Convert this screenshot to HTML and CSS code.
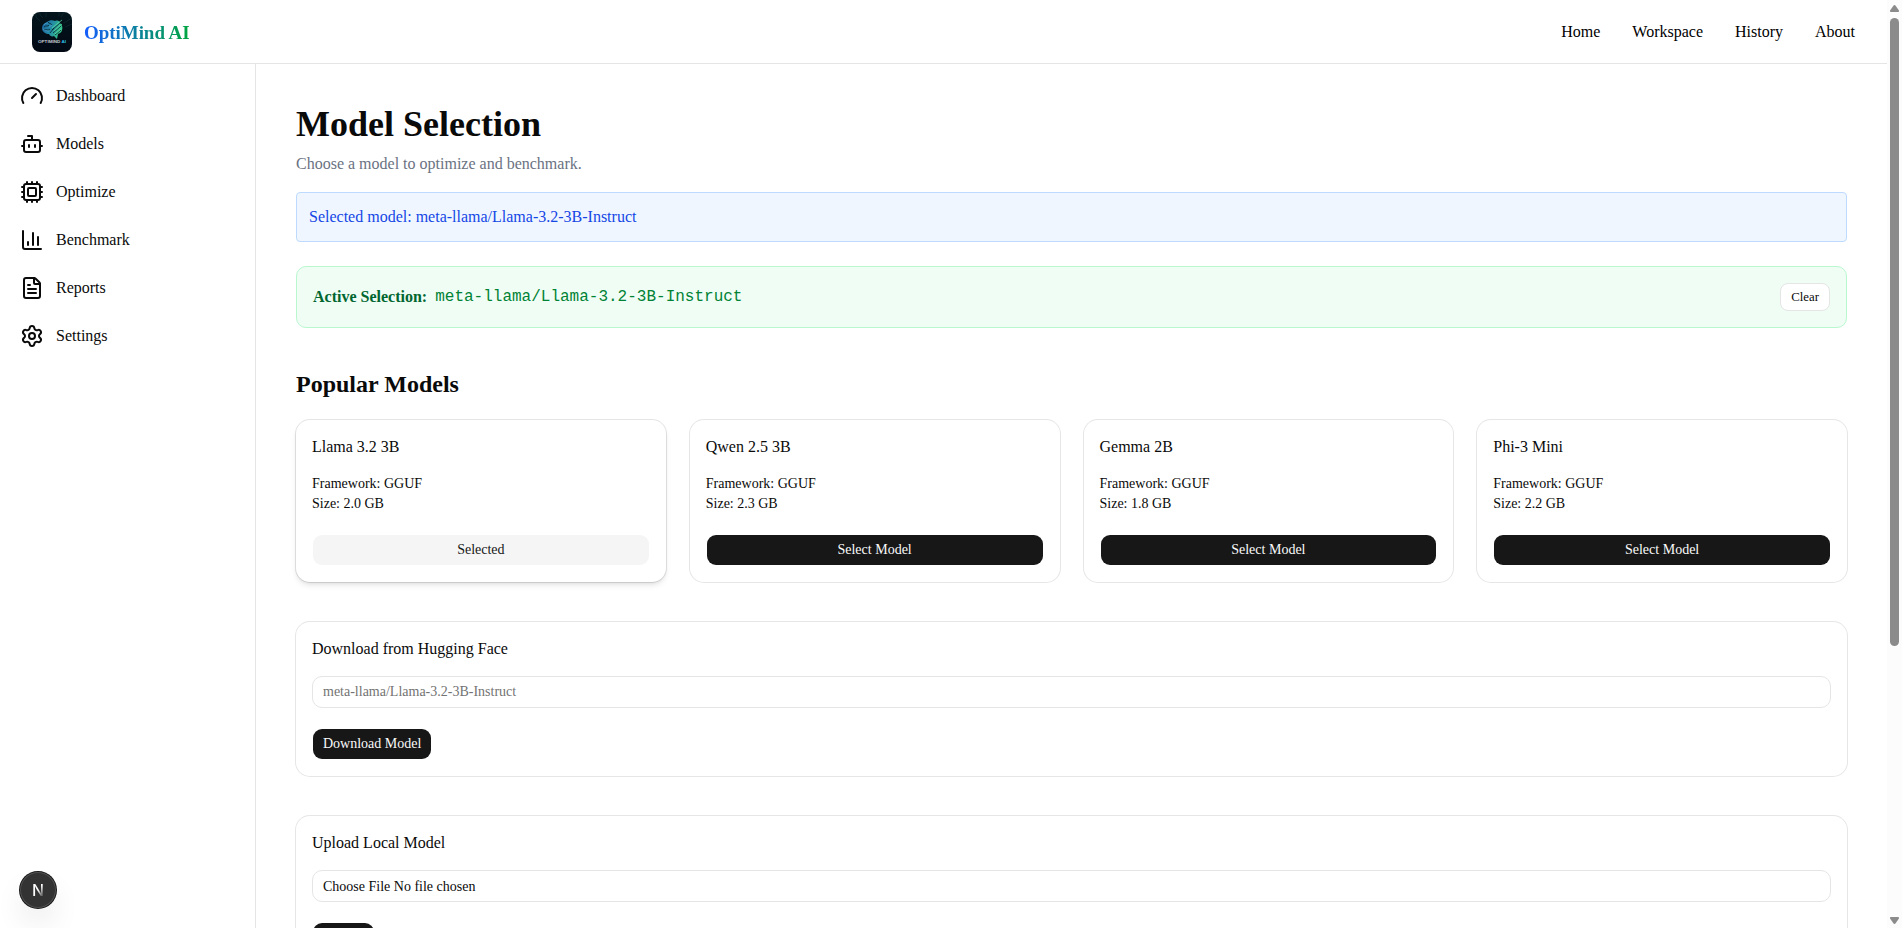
FILE: index.html
```
<!DOCTYPE html>
<html lang="en">
<head>
    <meta charset="UTF-8">
    <meta name="viewport" content="width=device-width, initial-scale=1.0">
    <title>OptiMind AI</title>
    <link rel="stylesheet" href="styles.css">
</head>
<body>
    <div class="page">
        <header class="header">
            <a class="brand" href="#">
                <svg class="brand-logo" width="40" height="40" viewBox="0 0 40 40">
                    <defs>
                        <linearGradient id="brainFill" x1="0" y1="0" x2="1" y2="0.3">
                            <stop offset="0" stop-color="#1c5f9c"/>
                            <stop offset="0.5" stop-color="#2389a6"/>
                            <stop offset="1" stop-color="#35c48a"/>
                        </linearGradient>
                        <linearGradient id="logoBg" x1="0" y1="0" x2="0" y2="1">
                            <stop offset="0" stop-color="#04151c"/>
                            <stop offset="1" stop-color="#020914"/>
                        </linearGradient>
                    </defs>
                    <rect width="40" height="40" fill="url(#logoBg)"/>
                    <g fill="none" stroke="#123038" stroke-width="0.6">
                        <path d="M4 0v5l4 4M8 0v3l3 3M14 0v5M27 0v4M32 0l-3 5M40 6l-8 5M40 12l-7 3"/>
                    </g>
                    <path d="M10 16c0-3 2-5 5-6 2-2 6-2 8-1 3-1 5 0 5 2 2 2 3 4 2 7 0 2-2 3-4 4l-1 5-3-3c-2 1-4 0-5-2-3 0-7-2-7-6z" fill="url(#brainFill)"/>
                    <g fill="none" stroke="#06202c" stroke-width="0.8">
                        <path d="M12 15c2-2 4 0 5-2M12 18c3-1 4 1 6-1M16 10c1 2 3 1 4 3M18 21l4-5"/>
                        <path d="M20 18l8-7M21 21l8-7M23 23l6-5"/>
                    </g>
                    <g fill="none" stroke="#5fe3a4" stroke-width="0.7">
                        <path d="M20 16l10-8M22 19l8-7M23 22l6-5"/>
                    </g>
                    <path d="M12 13c1-2 3-2 4-2M11 17c2 2 4 2 6 2M17 15l3-2" fill="none" stroke="#56a9d8" stroke-width="0.6"/>
                    <text class="logo-text" x="6" y="31.3" textLength="28" lengthAdjust="spacingAndGlyphs">OPTIMIND <tspan fill="#2bc0ea">AI</tspan></text>
                </svg>
                <span class="brand-name">OptiMind AI</span>
            </a>
            <nav class="nav">
                <a href="#">Home</a>
                <a href="#">Workspace</a>
                <a href="#">History</a>
                <a href="#">About</a>
            </nav>
        </header>

        <div class="layout">
            <aside class="sidebar">
                <a class="sidebar-link" href="#">
                    <svg class="icon" viewBox="0 0 24 24"><path d="m12 14 4-4"/><path d="M3.34 19a10 10 0 1 1 17.32 0"/></svg>
                    <span>Dashboard</span>
                </a>
                <a class="sidebar-link" href="#">
                    <svg class="icon" viewBox="0 0 24 24"><path d="M12 8V4H8"/><rect width="16" height="12" x="4" y="8" rx="2"/><path d="M2 14h2"/><path d="M20 14h2"/><path d="M15 13v2"/><path d="M9 13v2"/></svg>
                    <span>Models</span>
                </a>
                <a class="sidebar-link" href="#">
                    <svg class="icon" viewBox="0 0 24 24"><path d="M12 20v2"/><path d="M12 2v2"/><path d="M17 20v2"/><path d="M17 2v2"/><path d="M2 12h2"/><path d="M2 17h2"/><path d="M2 7h2"/><path d="M20 12h2"/><path d="M20 17h2"/><path d="M20 7h2"/><path d="M7 20v2"/><path d="M7 2v2"/><rect x="4" y="4" width="16" height="16" rx="2"/><rect x="8" y="8" width="8" height="8" rx="1"/></svg>
                    <span>Optimize</span>
                </a>
                <a class="sidebar-link" href="#">
                    <svg class="icon" viewBox="0 0 24 24"><path d="M3 3v16a2 2 0 0 0 2 2h16"/><path d="M18 17V9"/><path d="M13 17V5"/><path d="M8 17v-3"/></svg>
                    <span>Benchmark</span>
                </a>
                <a class="sidebar-link" href="#">
                    <svg class="icon" viewBox="0 0 24 24"><path d="M6 22a2 2 0 0 1-2-2V4a2 2 0 0 1 2-2h8a2.4 2.4 0 0 1 1.704.706l3.588 3.588A2.4 2.4 0 0 1 20 8v12a2 2 0 0 1-2 2z"/><path d="M14 2v5a1 1 0 0 0 1 1h5"/><path d="M10 9H8"/><path d="M16 13H8"/><path d="M16 17H8"/></svg>
                    <span>Reports</span>
                </a>
                <a class="sidebar-link" href="#">
                    <svg class="icon" viewBox="0 0 24 24"><path d="M9.671 4.136a2.34 2.34 0 0 1 4.659 0 2.34 2.34 0 0 0 3.319 1.915 2.34 2.34 0 0 1 2.33 4.033 2.34 2.34 0 0 0 0 3.831 2.34 2.34 0 0 1-2.33 4.033 2.34 2.34 0 0 0-3.319 1.915 2.34 2.34 0 0 1-4.659 0 2.34 2.34 0 0 0-3.32-1.915 2.34 2.34 0 0 1-2.33-4.033 2.34 2.34 0 0 0 0-3.831A2.34 2.34 0 0 1 6.35 6.051a2.34 2.34 0 0 0 3.319-1.915"/><circle cx="12" cy="12" r="3"/></svg>
                    <span>Settings</span>
                </a>
            </aside>

            <main class="main">
                <h1>Model Selection</h1>
                <p class="subtitle">Choose a model to optimize and benchmark.</p>

                <div class="notice">Selected model: meta-llama/Llama-3.2-3B-Instruct</div>

                <div class="active-selection">
                    <div class="active-text">
                        <strong>Active Selection:</strong>
                        <span class="active-model">meta-llama/Llama-3.2-3B-Instruct</span>
                    </div>
                    <button class="btn-clear" type="button">Clear</button>
                </div>

                <h2>Popular Models</h2>
                <div class="models">
                    <div class="card card-selected">
                        <div class="card-title">Llama 3.2 3B</div>
                        <p>Framework: GGUF</p>
                        <p>Size: 2.0 GB</p>
                        <button class="btn btn-secondary btn-block" type="button">Selected</button>
                    </div>
                    <div class="card">
                        <div class="card-title">Qwen 2.5 3B</div>
                        <p>Framework: GGUF</p>
                        <p>Size: 2.3 GB</p>
                        <button class="btn btn-block" type="button">Select Model</button>
                    </div>
                    <div class="card">
                        <div class="card-title">Gemma 2B</div>
                        <p>Framework: GGUF</p>
                        <p>Size: 1.8 GB</p>
                        <button class="btn btn-block" type="button">Select Model</button>
                    </div>
                    <div class="card">
                        <div class="card-title">Phi-3 Mini</div>
                        <p>Framework: GGUF</p>
                        <p>Size: 2.2 GB</p>
                        <button class="btn btn-block" type="button">Select Model</button>
                    </div>
                </div>

                <div class="card card-wide">
                    <div class="card-title">Download from Hugging Face</div>
                    <input class="input" type="text" placeholder="meta-llama/Llama-3.2-3B-Instruct">
                    <button class="btn" type="button">Download Model</button>
                </div>

                <div class="card card-wide">
                    <div class="card-title">Upload Local Model</div>
                    <label class="input file-input">Choose File No file chosen<input type="file" hidden></label>
                    <button class="btn" type="button">Upload</button>
                </div>
            </main>
        </div>
    </div>

    <div class="scrollbar">
        <svg width="9" height="7" viewBox="0 0 9 7"><path d="M4.5 0c.5 0 .8.3 1.1.7L8.8 5.3c.4.8.1 1.7-.8 1.7H1c-.9 0-1.2-.9-.8-1.7L3.4.7c.3-.4.6-.7 1.1-.7z"/></svg>
        <div class="scrollbar-thumb"></div>
        <svg class="scrollbar-down" width="9" height="7" viewBox="0 0 9 7"><path d="M4.5 7c.5 0 .8-.3 1.1-.7l3.2-4.6C9.2.9 8.9 0 8 0H1C.1 0-.2.9.2 1.7l3.2 4.6c.3.4.6.7 1.1.7z"/></svg>
    </div>

    <button class="dev-badge" type="button"><span>N</span></button>
</body>
</html>
```

FILE: styles.css
```
* {
    box-sizing: border-box;
}
body {
    display: flex;
    height: 100vh;
    margin: 0;
    overflow: hidden;
    background: #fff;
    color: #0a0a0a;
    font-family: "Liberation Serif", "Times New Roman", serif;
    font-size: 16px;
    line-height: 24px;
}
h1, h2, p {
    margin: 0;
}
a {
    color: inherit;
    text-decoration: none;
}
button, input {
    font-family: inherit;
}
.page {
    flex: 1;
    height: 100vh;
    overflow: hidden;
}

/* header */
.header {
    display: flex;
    align-items: center;
    justify-content: space-between;
    height: 64px;
    padding: 0 32px;
    border-bottom: 1px solid #e5e5e5;
}
.brand {
    display: flex;
    align-items: center;
    gap: 12px;
}
.brand-logo {
    border-radius: 8px;
}
.logo-text {
    fill: #c3ccd2;
    font-family: "Liberation Sans", Arial, sans-serif;
    font-size: 4px;
    font-weight: bold;
}
.brand-name {
    padding-top: 2px;
    font-size: 19px;
    font-weight: bold;
    line-height: 28px;
    letter-spacing: -0.05px;
    color: transparent;
    background: linear-gradient(to right, #155dfc, #00a63e);
    background-clip: text;
    -webkit-background-clip: text;
}
.nav {
    display: flex;
    gap: 32px;
    padding-top: 1px;
    color: #000;
}

/* sidebar */
.layout {
    display: flex;
    min-height: calc(100vh - 64px);
}
.sidebar {
    flex: 0 0 256px;
    padding: 8px;
    border-right: 1px solid #e5e5e5;
}
.sidebar-link {
    display: flex;
    align-items: center;
    gap: 12px;
    padding: 12px;
}
.icon {
    width: 24px;
    height: 24px;
    fill: none;
    stroke: currentColor;
    stroke-width: 2;
    stroke-linecap: round;
    stroke-linejoin: round;
}

/* content */
.main {
    flex: 1;
    padding: 40px;
}
h1 {
    font-size: 36px;
    line-height: 40px;
}
.subtitle {
    margin-top: 8px;
    color: #6a7282;
}
.notice {
    margin-top: 16px;
    padding: 12px;
    border: 1px solid #bedbff;
    border-radius: 4px;
    background: #eff6ff;
    color: #1447e6;
}
.active-selection {
    display: flex;
    align-items: center;
    justify-content: space-between;
    margin-top: 24px;
    padding: 16px;
    border: 1px solid #b9f8cf;
    border-radius: 10px;
    background: #f0fdf4;
}
.active-text {
    display: flex;
    align-items: center;
    gap: 8px;
    color: #016630;
}
.active-model {
    color: #008236;
    font-family: "Liberation Mono", "Courier New", monospace;
}
.btn-clear {
    height: 28px;
    padding: 0 10px;
    border: 1px solid #e5e5e5;
    border-radius: 8px;
    background: #fff;
    color: #0a0a0a;
    font-size: 12.8px;
}
h2 {
    margin: 40px 0 20px;
    font-size: 24px;
    line-height: 32px;
}
.models {
    display: grid;
    grid-template-columns: repeat(4, 1fr);
    gap: 24px;
}
.card {
    padding: 16px;
    border-radius: 14px;
    background: #fff;
    box-shadow: 0 0 0 1px rgba(10, 10, 10, 0.1);
    font-size: 14px;
    line-height: 20px;
}
.card-selected {
    box-shadow: 0 0 0 1px rgba(10, 10, 10, 0.1), 0 4px 6px -1px rgba(0, 0, 0, 0.1), 0 2px 4px -2px rgba(0, 0, 0, 0.1);
}
.card-wide {
    margin-top: 40px;
}
.card-title {
    margin-bottom: 16px;
    font-size: 16px;
    line-height: 22px;
}
.btn {
    display: block;
    height: 32px;
    margin-top: 20px;
    padding: 0 10px;
    border: 1px solid transparent;
    border-radius: 10px;
    background: #171717;
    background-clip: padding-box;
    color: #fafafa;
    font-size: 14px;
}
.btn-secondary {
    background-color: #f5f5f5;
    color: #171717;
}
.btn-block {
    width: 100%;
}
.input {
    display: block;
    width: 100%;
    height: 32px;
    padding: 4px 10px;
    border: 1px solid #e5e5e5;
    border-radius: 10px;
    background: transparent;
    font-size: 14px;
}
.input::placeholder {
    color: #737373;
}
.file-input {
    line-height: 24px;
}

/* scrollbar */
.scrollbar {
    display: flex;
    flex: 0 0 15px;
    flex-direction: column;
    padding: 5px 3px 4px;
    background: #fcfcfc;
    fill: #8b8b8b;
}
.scrollbar-thumb {
    width: 9px;
    height: 628px;
    margin-top: 6px;
    border-radius: 5px;
    background: #8b8b8b;
}
.scrollbar-down {
    margin-top: auto;
}

/* dev tools badge */
.dev-badge {
    position: fixed;
    left: 20px;
    bottom: 20px;
    width: 36px;
    height: 36px;
    padding: 0;
    border: none;
    border-radius: 50%;
    background: #333;
    box-shadow: 0 0 0 1px #171717, inset 0 0 0 1px rgba(255, 255, 255, 0.14), 0 16px 32px -8px rgba(0, 0, 0, 0.24);
}
.dev-badge span {
    color: transparent;
    background: linear-gradient(125deg, #fff 50%, #666 80%);
    background-clip: text;
    -webkit-background-clip: text;
    font-family: Inter, sans-serif;
    font-size: 16px;
    font-weight: 500;
}
```
